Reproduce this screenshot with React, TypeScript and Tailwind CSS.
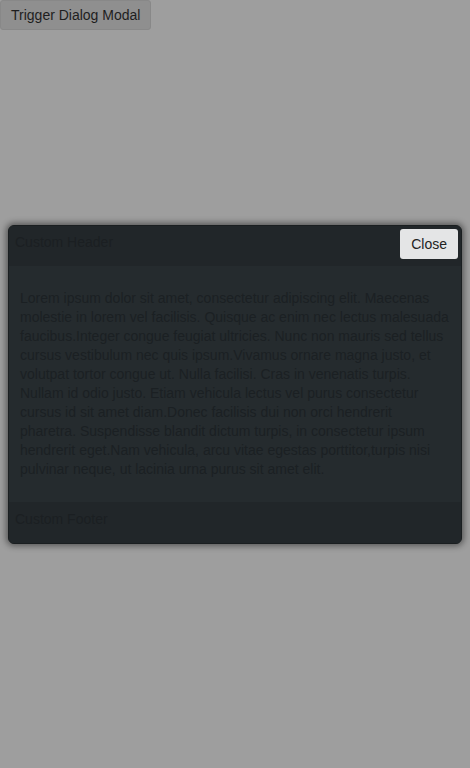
export default function App() {
  const text =
    'Lorem ipsum dolor sit amet, consectetur adipiscing elit. Maecenas molestie in lorem vel facilisis. Quisque ac enim nec lectus malesuada faucibus.Integer congue feugiat ultricies. Nunc non mauris sed tellus cursus vestibulum nec quis ipsum.Vivamus ornare magna justo, et volutpat tortor congue ut. Nulla facilisi. Cras in venenatis turpis. Nullam id odio justo. Etiam vehicula lectus vel purus consectetur cursus id sit amet diam.Donec facilisis dui non orci hendrerit pharetra. Suspendisse blandit dictum turpis, in consectetur ipsum hendrerit eget.Nam vehicula, arcu vitae egestas porttitor,turpis nisi pulvinar neque, ut lacinia urna purus sit amet elit.';

  return (
    <div
      className="relative h-[768px] w-[470px] bg-[#9e9e9e] text-[14px]"
      style={{ fontFamily: '"Liberation Sans", Arial, sans-serif' }}
    >
      {/* trigger button behind the overlay */}
      <button className="h-[30px] rounded-[3px] border border-[#888] bg-[#8f8f8f] px-[10px] text-[14px] text-[#1e1e1e]">
        Trigger Dialog Modal
      </button>

      {/* dialog */}
      <div className="absolute left-[8px] top-[225px] w-[454px] overflow-hidden rounded-[6px] border border-[#1a1e20] bg-[#252b2e] shadow-[0_0_6px_2px_rgba(0,0,0,0.45)]">
        <div className="flex h-[40px] items-start justify-between bg-[#212629] pl-[6px] pr-[3px]">
          <span className="mt-[8px] leading-[16px] text-[#1b1f22]">Custom Header</span>
          <button className="mt-[3px] h-[30px] rounded-[3px] bg-[#e4e5e6] px-[11px] text-[#222]">Close</button>
        </div>
        <div className="px-[11px] py-[23px]">
          <p className="leading-[19px] text-[#1b2023]">{text}</p>
        </div>
        <div className="flex h-[41px] items-start bg-[#212629] px-[6px] pt-[9px]">
          <span className="leading-[16px] text-[#1b1f22]">Custom Footer</span>
        </div>
      </div>
    </div>
  );
}
